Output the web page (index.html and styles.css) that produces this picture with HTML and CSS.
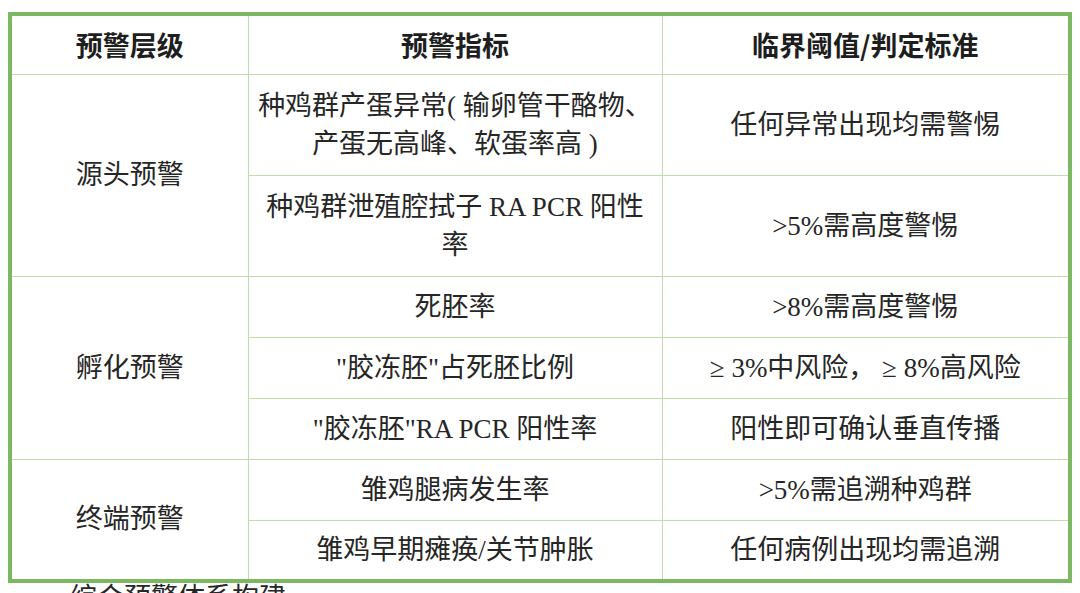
FILE: index.html
```html
<!DOCTYPE html>
<html lang="zh-CN">
<head>
<meta charset="utf-8">
<title>预警指标</title>
<link rel="stylesheet" href="styles.css">
</head>
<body>
<table class="warn">
  <colgroup>
    <col class="c1">
    <col class="c2">
    <col class="c3">
  </colgroup>
  <thead>
    <tr class="r-hd">
      <th>预警层级</th>
      <th>预警指标</th>
      <th>临界阈值/判定标准</th>
    </tr>
  </thead>
  <tbody>
    <tr class="r-tall">
      <td rowspan="2">源头预警</td>
      <td>种鸡群产蛋异常( 输卵管干酪物、<br>产蛋无高峰、软蛋率高 )</td>
      <td>任何异常出现均需警惕</td>
    </tr>
    <tr class="r-tall">
      <td>种鸡群泄殖腔拭子 RA PCR 阳性<br>率</td>
      <td>&gt;5%需高度警惕</td>
    </tr>
    <tr class="r">
      <td rowspan="3">孵化预警</td>
      <td>死胚率</td>
      <td>&gt;8%需高度警惕</td>
    </tr>
    <tr class="r">
      <td>"胶冻胚"占死胚比例</td>
      <td>≥ 3%中风险， ≥ 8%高风险</td>
    </tr>
    <tr class="r">
      <td>"胶冻胚"RA PCR 阳性率</td>
      <td>阳性即可确认垂直传播</td>
    </tr>
    <tr class="r">
      <td rowspan="2">终端预警</td>
      <td>雏鸡腿病发生率</td>
      <td>&gt;5%需追溯种鸡群</td>
    </tr>
    <tr class="r">
      <td>雏鸡早期瘫痪/关节肿胀</td>
      <td>任何病例出现均需追溯</td>
    </tr>
  </tbody>
</table>
<p class="after">综合预警体系构建</p>
</body>
</html>
```
FILE: styles.css
```css
html, body {
  margin: 0;
  padding: 0;
  background: #ffffff;
}

body {
  font-family: "Liberation Serif", "Noto Sans CJK SC", serif;
  color: #262626;
  overflow: hidden;
}

.warn {
  margin: 12px 0 0 8px;
  width: 1060px;
  border-collapse: collapse;
  table-layout: fixed;
  border: 4px solid #7cb862;
}

.c1 { width: 238px; }
.c2 { width: 414px; }
.c3 { width: 408px; }

.warn th,
.warn td {
  border: 1px solid #c2dbab;
  text-align: center;
  vertical-align: middle;
  padding: 0 4px;
  font-size: 27px;
  line-height: 38px;
}

.warn th {
  font-family: "Noto Sans CJK SC", sans-serif;
  font-weight: 700;
  color: #1e1e1e;
}

.r-hd { height: 60px; }
.r-tall { height: 101px; }
.r { height: 61px; }

.after {
  margin: 0 0 0 16px;
  text-indent: 2em;
  font-size: 27px;
  line-height: 30px;
}
```
